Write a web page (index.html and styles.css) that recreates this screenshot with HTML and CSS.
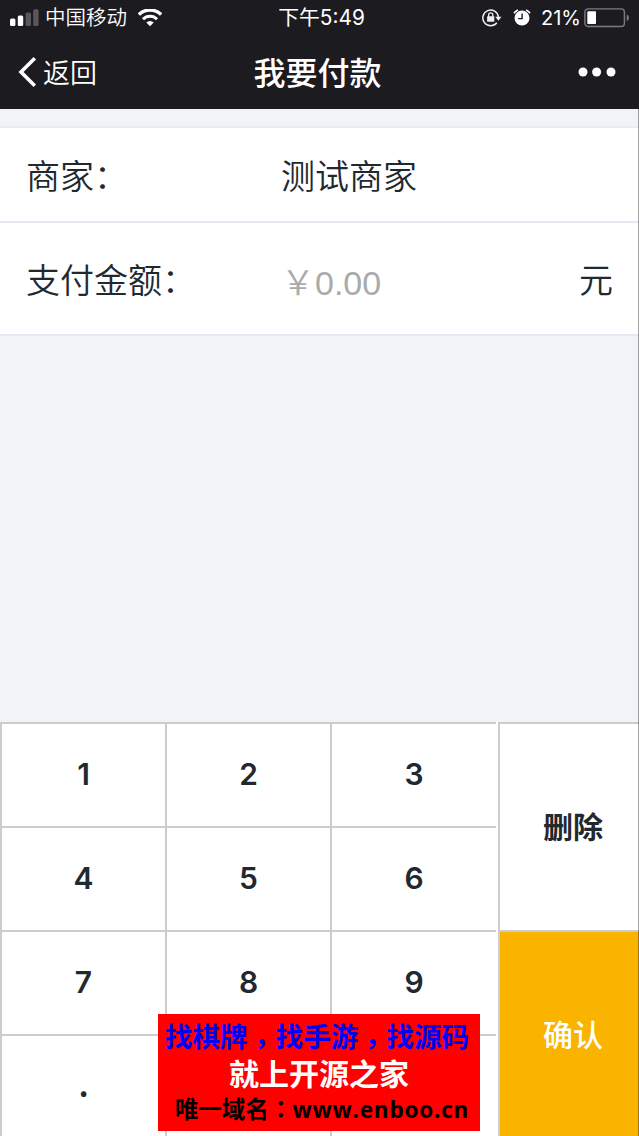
FILE: index.html
```html
<!DOCTYPE html>
<html lang="zh-CN">
<head>
  <meta charset="UTF-8" />
  <title>我要付款</title>
  <meta name="viewport" content="width=device-width, initial-scale=1" />
  <link rel="stylesheet" href="styles.css">
</head>
<body>
  <div class="page">
    <header class="header">
      <div class="status-bar">
        <div class="status-left">
          <svg class="signal" width="29" height="18" viewBox="0 0 29 18">
            <rect x="0" y="9.5" width="5.4" height="7.5" rx="1.5" fill="#fff"/>
            <rect x="7.8" y="6.5" width="5.4" height="10.5" rx="1.5" fill="#fff"/>
            <rect x="15.6" y="3.5" width="5.4" height="13.5" rx="1.5" fill="#58575b"/>
            <rect x="23.2" y="0.3" width="5.4" height="16.7" rx="1.5" fill="#58575b"/>
          </svg>
          <span class="carrier">中国移动</span>
          <svg class="wifi" width="24" height="18" viewBox="0 0 24 18">
            <path d="M.9 5.6A15.8 15.8 0 0 1 23.1 5.6" fill="none" stroke="#fff" stroke-width="3.4"/>
            <path d="M5 10.2A9.8 9.8 0 0 1 19 10.2" fill="none" stroke="#fff" stroke-width="3"/>
            <path d="M8.3 13.5A5.3 5.3 0 0 1 15.7 13.5L12 17.2Z" fill="#fff"/>
          </svg>
        </div>
        <span class="time">下午5:49</span>
        <div class="status-right">
          <svg class="lock" width="20" height="18" viewBox="0 0 20 18">
            <path d="M16.4 8A7.8 7.8 0 1 0 14.8 13.7" fill="none" stroke="#eee" stroke-width="1.5"/>
            <path d="M13.3 7.8h6.2l-3.1 4z" fill="#eee"/>
            <rect x="5.1" y="7.2" width="7.2" height="5.6" rx=".6" fill="#eee"/>
            <path d="M6.6 8V6a2.1 2.1 0 0 1 4.2 0V8" fill="none" stroke="#eee" stroke-width="1.3"/>
          </svg>
          <svg class="alarm" width="18" height="18" viewBox="0 0 18 18">
            <circle cx="9" cy="9" r="7.5" fill="#fff"/>
            <path d="M1 4.3A9.5 9.5 0 0 1 4.9 .9M13.1 .9A9.5 9.5 0 0 1 17 4.3" fill="none" stroke="#fff" stroke-width="1.7"/>
            <path d="M9.1 4.6V9.6H5.2" fill="none" stroke="#1c1b20" stroke-width="1.4"/>
          </svg>
          <span class="percent">21%</span>
          <svg class="battery" width="46" height="20" viewBox="0 0 46 20">
            <rect x=".9" y=".9" width="39.5" height="17.6" rx="3.2" fill="none" stroke="#7d7c80" stroke-width="1.4"/>
            <rect x="3.3" y="3.3" width="8.7" height="12.8" rx=".8" fill="#fff"/>
            <path d="M42.7 6.4Q45 7 45 9.7T42.7 13Z" fill="#7d7c80"/>
          </svg>
        </div>
      </div>
      <div class="nav-bar">
        <a class="back">
          <svg width="19" height="32" viewBox="0 0 19 32">
            <path d="M16.8 2.3L3 16L16.8 29.7" fill="none" stroke="#fff" stroke-width="3.6"/>
          </svg>
          <span>返回</span>
        </a>
        <h1>我要付款</h1>
        <svg class="more" width="38" height="10" viewBox="0 0 38 10">
          <circle cx="5" cy="5" r="4.5" fill="#fff"/>
          <circle cx="18.6" cy="5" r="4.5" fill="#fff"/>
          <circle cx="33" cy="5" r="4.5" fill="#fff"/>
        </svg>
      </div>
    </header>

    <main class="content">
      <div class="form">
        <div class="row">
          <span class="label">商家：</span>
          <span class="value">测试商家</span>
        </div>
        <div class="row row-amount">
          <span class="label">支付金额：</span>
          <span class="value amount">￥0.00</span>
          <span class="unit">元</span>
        </div>
      </div>

      <div class="keyboard">
        <div class="keys">
          <div class="key">1</div>
          <div class="key">2</div>
          <div class="key">3</div>
          <div class="key">4</div>
          <div class="key">5</div>
          <div class="key">6</div>
          <div class="key">7</div>
          <div class="key">8</div>
          <div class="key">9</div>
          <div class="key key-dot">.</div>
          <div class="key"></div>
          <div class="key"></div>
        </div>
        <div class="actions">
          <div class="delete">删除</div>
          <div class="confirm">确认</div>
        </div>
      </div>
      <div class="edge"></div>
    </main>

    <div class="banner">
      <p class="line1">找棋牌<i class="comma" lang="zh-TW">，</i>找手游<i class="comma" lang="zh-TW">，</i>找源码</p>
      <p class="line2">就上开源之家</p>
      <p class="line3">唯一域名<i lang="zh-TW">：</i><span>www.enboo.cn</span></p>
    </div>
  </div>
</body>
</html>
```
FILE: styles.css
```css
* {
  box-sizing: border-box;
}
body {
  margin: 0;
  font-family: "Noto Sans CJK SC", sans-serif;
  color: #1f292f;
  background-color: #f2f3f8;
}
svg {
  display: block;
  flex: none;
}
.page {
  position: relative;
  display: flex;
  flex-direction: column;
  height: 1136px;
  overflow: hidden;
}
.header {
  height: 109px;
  background-color: #1c1b20;
  color: #fff;
}
.status-bar,
.nav-bar {
  display: grid;
  grid-template-columns: 1fr auto 1fr;
  align-items: center;
}
.status-bar {
  height: 36px;
  padding: 0 9px 0 10px;
  font-family: Inter, "Noto Sans CJK SC", sans-serif;
  font-size: 20.5px;
  line-height: 36px;
}
.status-left,
.status-right {
  display: flex;
  align-items: center;
}
.status-right {
  justify-content: flex-end;
}
.carrier {
  font-weight: 350;
  margin: 0 11px 0 6px;
}
.time {
  font-size: 20.8px;
  padding-left: 3px;
}
.alarm {
  margin: 0 10px 0 11px;
}
.percent {
  font-size: 20px;
  margin-right: 3px;
}
.nav-bar {
  height: 71px;
  padding: 0 23px 0 18px;
}
.back {
  display: flex;
  align-items: center;
  gap: 6px;
  font-size: 27px;
  font-weight: 350;
}
h1 {
  margin: 0;
  font-size: 32px;
  font-weight: 500;
  line-height: 46px;
  padding: 0 0 2px 1px;
}
.more {
  justify-self: end;
}
.content {
  position: relative;
  flex: 1;
  display: flex;
  flex-direction: column;
  justify-content: space-between;
  padding-top: 17px;
}
.form {
  border-top: 2px solid #e7ecf2;
  background-color: #fff;
  font-size: 34px;
  font-weight: 350;
}
.row {
  display: flex;
  align-items: center;
  height: 95px;
  padding: 0 26px;
  border-bottom: 2px solid #e5e9f3;
}
.row-amount {
  height: 113px;
}
.label {
  width: 255px;
}
.value {
  flex: 1;
}
.amount {
  font-family: "Liberation Sans", "Noto Sans CJK SC", sans-serif;
  color: #aaa;
  padding-top: 3px;
}
.keyboard {
  display: flex;
  justify-content: space-between;
  height: 414px;
  background-color: #fff;
  font-size: 30px;
}
.keys {
  display: grid;
  grid-template-columns: 165px 165px 166px;
  grid-auto-rows: 104px;
  font-family: Inter, sans-serif;
  font-weight: 600;
}
.key {
  display: flex;
  align-items: center;
  justify-content: center;
  padding-bottom: 2px;
  border-top: 2px solid #ccc;
  border-left: 2px solid #ccc;
}
.key-dot {
  font-family: "Noto Sans CJK SC", sans-serif;
  font-weight: 700;
  padding-bottom: 6px;
}
.actions {
  width: 141px;
  border-left: 2px solid #ccc;
  font-weight: 700;
}
.delete,
.confirm {
  display: flex;
  align-items: center;
  justify-content: center;
  height: 208px;
  padding: 0 0 4px 7px;
  border-top: 2px solid #ccc;
}
.confirm {
  background-color: #fab400;
  color: #fff;
  font-weight: 500;
}
/* thin line down the right side of the page */
.edge {
  position: absolute;
  top: 0;
  right: 0;
  bottom: 0;
  width: 1px;
  background-color: rgba(0, 0, 0, 0.35);
}
.banner {
  position: absolute;
  left: 158px;
  top: 1014px;
  width: 322px;
  height: 117px;
  background-color: #f00;
  text-align: center;
  font-weight: 700;
}
.banner p {
  margin: 0;
  white-space: nowrap;
}
/* centred punctuation */
.banner i {
  font-family: "Noto Sans CJK TC", sans-serif;
  font-style: normal;
  line-height: 1;
}
.banner .comma {
  vertical-align: -7px;
}
.banner .line1 {
  height: 43px;
  color: #00f;
  font-size: 27.7px;
  line-height: 43px;
  padding-right: 4px;
}
.banner .line2 {
  color: #fff;
  font-size: 30px;
  line-height: 30px;
}
.banner .line3 {
  color: #000;
  font-size: 23.5px;
  line-height: 42px;
  padding-left: 6px;
}
.line3 span {
  font-family: "Open Sans", sans-serif;
  font-size: 22.5px;
  letter-spacing: 0.8px;
}
```
